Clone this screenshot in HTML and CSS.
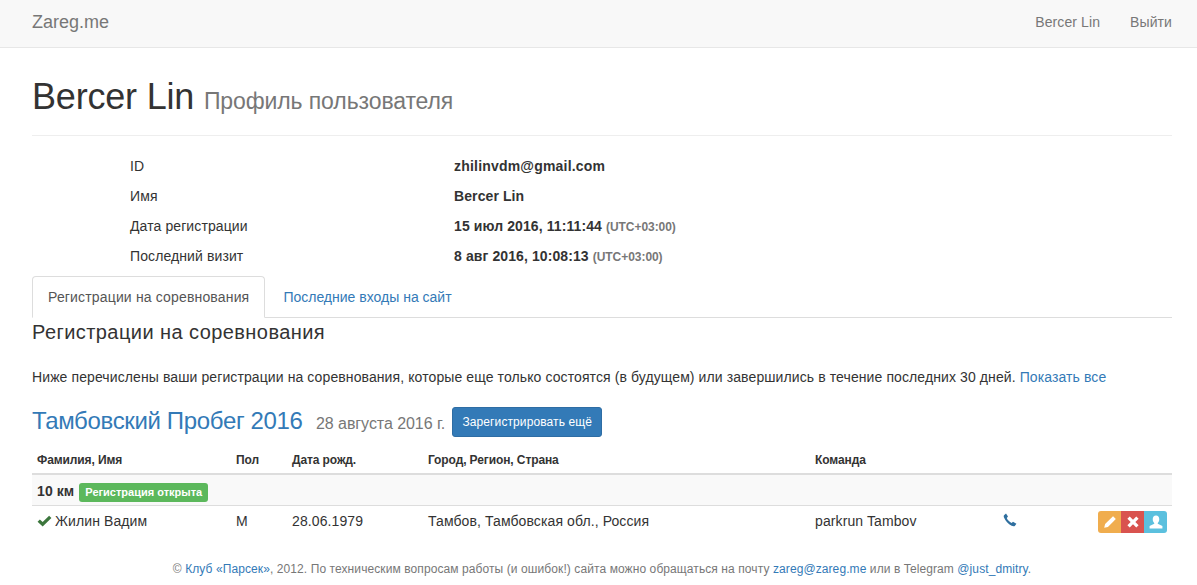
FILE: index.html
```html
<!DOCTYPE html>
<html lang="ru">

<head>
    <meta charset="UTF-8">
    <title>Zareg.me</title>
    <link rel="stylesheet" href="styles.css">
</head>

<body>
    <nav class="navbar">
        <a class="brand" href="#">Zareg.me</a>
        <div class="nav-links">
            <a href="#">Bercer Lin</a>
            <a href="#">Выйти</a>
        </div>
    </nav>

    <div class="container">
        <div class="page-header">
            <h1>Bercer Lin <small>Профиль пользователя</small></h1>
        </div>

        <div class="info">
            <div class="info-row">
                <div class="info-label">ID</div>
                <div class="info-value"><b class="email">zhilinvdm@gmail.com</b></div>
            </div>
            <div class="info-row">
                <div class="info-label">Имя</div>
                <div class="info-value"><b>Bercer Lin</b></div>
            </div>
            <div class="info-row">
                <div class="info-label">Дата регистрации</div>
                <div class="info-value"><b>15 июл 2016, 11:11:44</b> <span class="tz">(UTC+03:00)</span></div>
            </div>
            <div class="info-row">
                <div class="info-label">Последний визит</div>
                <div class="info-value"><b>8 авг 2016, 10:08:13</b> <span class="tz">(UTC+03:00)</span></div>
            </div>
        </div>

        <ul class="tabs">
            <li class="tab active"><a href="#">Регистрации на соревнования</a></li>
            <li class="tab"><a href="#">Последние входы на сайт</a></li>
        </ul>

        <h3>Регистрации на соревнования</h3>
        <p class="lead-text">Ниже перечислены ваши регистрации на соревнования, которые еще только состоятся (в будущем) или завершились в течение последних 30 дней. <a href="#">Показать все</a></p>

        <div class="event-title">
            <h2><a href="#">Тамбовский Пробег 2016</a> <small>28 августа 2016 г.</small></h2>
            <a class="btn-register" href="#">Зарегистрировать ещё</a>
        </div>

        <table>
            <thead>
                <tr>
                    <th class="col-name">Фамилия, Имя</th>
                    <th class="col-sex">Пол</th>
                    <th class="col-birth">Дата рожд.</th>
                    <th class="col-city">Город, Регион, Страна</th>
                    <th class="col-team">Команда</th>
                    <th class="col-phone"></th>
                    <th class="col-actions"></th>
                </tr>
            </thead>
            <tbody>
                <tr class="group-row">
                    <td colspan="7"><b>10 км</b> <span class="label">Регистрация открыта</span></td>
                </tr>
                <tr>
                    <td>
                        <svg class="icon-check" viewBox="0 0 16 13"><path d="M0.5 7.2 L3 4.8 L6 7.6 L13 0.8 L15.5 3.2 L6 12.4 Z"/></svg>
                        Жилин Вадим
                    </td>
                    <td>М</td>
                    <td>28.06.1979</td>
                    <td>Тамбов, Тамбовская обл., Россия</td>
                    <td>parkrun Tambov</td>
                    <td>
                        <svg class="icon-phone" viewBox="0 0 14 14"><path d="M1 2.2 L3 0.5 L5 3.6 L3.8 5 C4.3 6.8 6.6 9.2 8.6 9.9 L10 8.8 L13.4 10.8 L11.8 12.9 C11.2 13.5 9.8 13.4 8.6 12.8 C5.2 11.2 2.4 8 1 4.6 C0.7 3.6 0.6 2.8 1 2.2 Z"/></svg>
                    </td>
                    <td class="actions">
                        <div class="btn-group">
                            <a class="btn btn-edit" href="#"><svg viewBox="0 0 12 12"><path d="M8.6 1 L11 3.4 L4.2 10.2 L1 11 L1.8 7.8 Z"/></svg></a>
                            <a class="btn btn-remove" href="#"><svg viewBox="0 0 12 12"><path d="M3.2 1.2 L6 4 L8.8 1.2 L10.8 3.2 L8 6 L10.8 8.8 L8.8 10.8 L6 8 L3.2 10.8 L1.2 8.8 L4 6 L1.2 3.2 Z"/></svg></a>
                            <a class="btn btn-user" href="#"><svg viewBox="0 0 12 12"><path d="M6 0.5 C7.8 0.5 8.8 1.9 8.8 3.6 C8.8 5 8.2 6.1 7.5 6.8 L7.5 7.6 L11.5 9.4 L11.5 11.5 L0.5 11.5 L0.5 9.4 L4.5 7.6 L4.5 6.8 C3.8 6.1 3.2 5 3.2 3.6 C3.2 1.9 4.2 0.5 6 0.5 Z"/></svg></a>
                        </div>
                    </td>
                </tr>
            </tbody>
        </table>

        <footer>© <a href="#">Клуб «Парсек»</a>, 2012. По техническим вопросам работы (и ошибок!) сайта можно обращаться на почту <a href="#">zareg@zareg.me</a> или в Telegram <a href="#">@just_dmitry</a>.</footer>
    </div>
</body>

</html>
```

FILE: styles.css
```css
* {
    box-sizing: border-box;
}

body {
    margin: 0;
    font-family: "Liberation Sans", Arial, sans-serif;
    font-size: 14px;
    line-height: 20px;
    letter-spacing: 0.1px;
    color: #333;
    background-color: #fff;
}

a {
    color: #337ab7;
    text-decoration: none;
}

.navbar {
    display: flex;
    justify-content: space-between;
    align-items: center;
    height: 48px;
    padding: 0 25px 3px 32px;
    background-color: #f8f8f8;
    border-bottom: 1px solid #e7e7e7;
}

.brand {
    font-size: 18px;
    letter-spacing: 0;
    color: #777;
}

.nav-links {
    display: flex;
    gap: 30px;
}

.nav-links a {
    color: #777;
}

.container {
    padding: 0 25px 0 32px;
}

.page-header {
    height: 88px;
    padding-top: 29px;
    border-bottom: 1px solid #eee;
}

h1 {
    margin: 0;
    font-size: 36px;
    font-weight: 400;
    line-height: 40px;
    letter-spacing: -0.2px;
}

h1 small {
    font-size: 23px;
    letter-spacing: -0.1px;
    color: #777;
}

.info {
    padding-top: 15px;
}

.info-row {
    display: flex;
    height: 30px;
    line-height: 30px;
}

.info-label {
    width: 324px;
    margin-left: 98px;
}

.email {
    letter-spacing: 0.2px;
}

.tz {
    font-size: 12px;
    font-weight: 700;
    letter-spacing: -0.05px;
    color: #777;
}

.tabs {
    display: flex;
    height: 42px;
    margin: 5px 0 0;
    padding: 0;
    list-style: none;
    border-bottom: 1px solid #ddd;
}

.tab a {
    display: block;
    height: 42px;
    padding: 10px 15px;
    margin-right: 2px;
    letter-spacing: 0;
    border: 1px solid transparent;
    border-radius: 4px 4px 0 0;
}

.tab.active a {
    letter-spacing: 0.16px;
    color: #555;
    background-color: #fff;
    border-color: #ddd #ddd #fff;
}

h3 {
    margin: 1px 0 0;
    font-size: 20px;
    font-weight: 400;
    line-height: 26px;
    letter-spacing: 0.43px;
}

.lead-text {
    margin: 22px 0 0;
}

.event-title {
    display: flex;
    align-items: center;
    gap: 7px;
    height: 32px;
    margin-top: 19px;
}

h2 {
    margin: 0;
    font-size: 24px;
    font-weight: 400;
    line-height: 32px;
    letter-spacing: -0.35px;
}

h2 small {
    margin-left: 7px;
    font-size: 16px;
    letter-spacing: -0.05px;
    color: #777;
}

.btn-register {
    height: 30px;
    width: 150px;
    padding: 5px 0;
    font-size: 12px;
    line-height: 18px;
    letter-spacing: 0.1px;
    text-align: center;
    color: #fff;
    background-color: #337ab7;
    border: 1px solid #2e6da4;
    border-radius: 3px;
}

table {
    width: 100%;
    margin-top: 9px;
    border-collapse: collapse;
    table-layout: fixed;
}

th,
td {
    padding: 5px;
    text-align: left;
}

th {
    height: 27px;
    padding: 2px 5px;
    font-size: 12px;
    font-weight: 700;
    letter-spacing: -0.1px;
    border-bottom: 2px solid #ddd;
}

td {
    height: 31px;
    vertical-align: top;
    border-top: 1px solid #ddd;
}

.col-name {
    width: 199px;
}

.col-sex {
    width: 56px;
}

.col-birth {
    width: 136px;
}

.col-city {
    width: 387px;
}

.col-team {
    width: 188px;
}

.col-phone {
    width: 70px;
}

.group-row td {
    height: 31px;
    padding: 6px 5px 0;
    background-color: #f9f9f9;
}

.label {
    display: inline-block;
    margin-left: 1px;
    padding: 0 6px;
    font-size: 11px;
    line-height: 19px;
    letter-spacing: 0;
    font-weight: 700;
    color: #fff;
    background-color: #5cb85c;
    border-radius: 3px;
}

.icon-check {
    width: 15px;
    height: 12px;
    margin-right: -1px;
    fill: #3c763d;
    vertical-align: -1px;
}

.icon-phone {
    width: 14px;
    height: 14px;
    fill: #2f6f9f;
    vertical-align: -1px;
}

.actions {
    text-align: right;
}

.btn-group {
    display: inline-flex;
    vertical-align: top;
}

.btn {
    display: flex;
    align-items: center;
    justify-content: center;
    width: 23px;
    height: 22px;
}

.btn svg {
    width: 14px;
    height: 14px;
    fill: #fff;
}

.btn-edit {
    background-color: #f0ad4e;
    border-radius: 3px 0 0 3px;
}

.btn-remove {
    background-color: #d9534f;
}

.btn-user {
    background-color: #5bc0de;
    border-radius: 0 3px 3px 0;
}

footer {
    margin-top: 21px;
    font-size: 12px;
    letter-spacing: 0.09px;
    color: #777;
    text-align: center;
}
```
